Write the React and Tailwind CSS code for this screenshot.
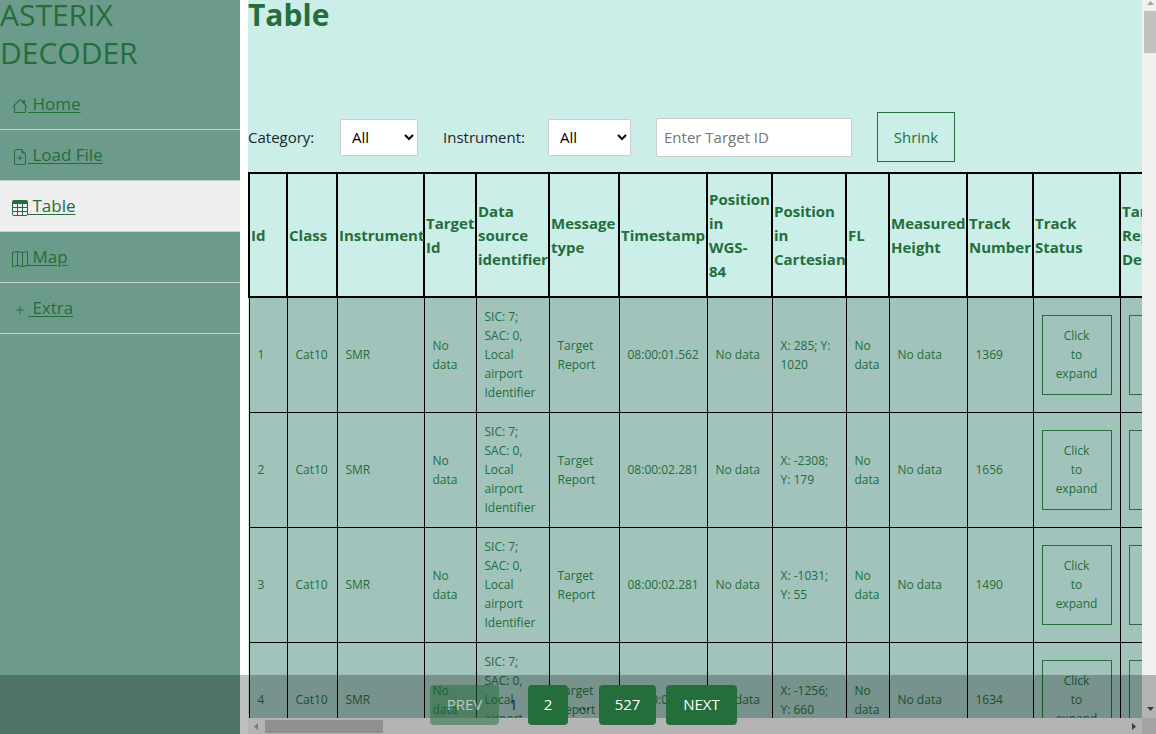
import React from "react";
import { BsHouse, BsFileEarmarkPlus, BsTable, BsMap, BsPlus } from "react-icons/bs";

const links = [
  { label: "Home", Icon: BsHouse },
  { label: "Load File", Icon: BsFileEarmarkPlus },
  { label: "Table", Icon: BsTable, active: true },
  { label: "Map", Icon: BsMap },
  { label: "Extra", Icon: BsPlus },
];

const columns = [
  { title: "Id", width: "w-[38px]" },
  { title: "Class", width: "w-[50px]" },
  { title: "Instrument", width: "w-[87px]" },
  { title: "Target Id", width: "w-[52px]" },
  { title: "Data source identifier", width: "w-[73px]" },
  { title: "Message type", width: "w-[70px]" },
  { title: "Timestamp", width: "w-[88px]" },
  { title: "Position\nin\nWGS-\n84", width: "w-[65px]" },
  { title: "Position in Cartesian", width: "w-[74px]" },
  { title: "FL", width: "w-[43px]" },
  { title: "Measured Height", width: "w-[78px]" },
  { title: "Track Number", width: "w-[66px]" },
  { title: "Track Status", width: "w-[87px]" },
  { title: "Target Report Descriptor", width: "w-[87px]" },
];

const rows = [
  { id: 1, time: "08:00:01.562", xy: "X: 285; Y: 1020", track: 1369 },
  { id: 2, time: "08:00:02.281", xy: "X: -2308; Y: 179", track: 1656 },
  { id: 3, time: "08:00:02.281", xy: "X: -1031; Y: 55", track: 1490 },
  { id: 4, time: "08:00:02.281", xy: "X: -1256; Y: 660", track: 1634 },
];

function Sidebar() {
  return (
    <aside className="w-60 shrink-0 bg-[#6c9b8b] text-[#236e3a]">
      <h1 className="-mt-1 text-[30px] leading-[38px]">
        ASTERIX
        <br />
        DECODER
      </h1>
      <nav className="pt-[7px]">
        <ul>
          {links.map(({ label, Icon, active }) => (
            <li key={label} className={active ? "border-b border-[#d0d0d0] bg-[#efefef]" : "border-b border-[#c8d0cc]"}>
              <a href="#" className="flex h-[50px] items-center px-3 text-[17px]">
                <Icon className="mt-1 size-4 shrink-0" />
                <span className="whitespace-pre underline underline-offset-2">{" " + label}</span>
              </a>
            </li>
          ))}
        </ul>
      </nav>
    </aside>
  );
}

function Filters() {
  return (
    <form className="flex items-center gap-[25px] pb-[10px] text-[15px] text-[#212529]">
      <label htmlFor="category" className="w-[67px] whitespace-nowrap">Category:</label>
      <select id="category" className="h-[37px] w-[78px] rounded-xs border border-[#ccc] bg-white px-[7px] text-black">
        <option>All</option>
      </select>
      <label htmlFor="instrument" className="w-20 whitespace-nowrap">Instrument:</label>
      <select id="instrument" className="h-[37px] w-[83px] rounded-xs border border-[#ccc] bg-white px-[7px] text-black">
        <option>All</option>
      </select>
      <input
        aria-label="Target ID"
        placeholder="Enter Target ID"
        className="h-[39px] w-[196px] rounded-xs border border-[#ccc] bg-white px-[7px] placeholder:text-[#757575]"
      />
      <button type="button" className="h-[50px] w-[78px] border border-[#236e3a] text-[#236e3a]">
        Shrink
      </button>
    </form>
  );
}

function ExpandButton() {
  return (
    <button type="button" className="block h-20 w-[70px] border border-[#236e3a] text-center leading-[19px]">
      Click
      <br />
      to
      <br />
      expand
    </button>
  );
}

function DataTable() {
  return (
    <table className="w-[958px] table-fixed border-collapse text-[#236e3a]">
      <thead>
        <tr className="h-[124px]">
          {columns.map((c) => (
            <th key={c.title} className={`${c.width} border-2 border-black px-px text-left text-[15px] leading-6 font-bold whitespace-pre-line`}>
              {c.title}
            </th>
          ))}
        </tr>
      </thead>
      <tbody className="bg-[#a1c3bc] text-[12px] leading-[19px]">
        {rows.map((r) => (
          <tr key={r.id} className="h-[115px] [&>td]:border [&>td]:border-black [&>td]:px-2">
            <td>{r.id}</td>
            <td>Cat10</td>
            <td>SMR</td>
            <td>No data</td>
            <td>SIC: 7; SAC: 0, Local airport Identifier</td>
            <td>Target Report</td>
            <td>{r.time}</td>
            <td className="whitespace-nowrap">No data</td>
            <td>{r.xy}</td>
            <td>No data</td>
            <td>No data</td>
            <td>{r.track}</td>
            <td><ExpandButton /></td>
            <td><ExpandButton /></td>
          </tr>
        ))}
      </tbody>
    </table>
  );
}

function VerticalBar() {
  return (
    <div aria-hidden="true" className="flex w-[14px] shrink-0 flex-col bg-[#f1f1f1]">
      <svg className="h-[11px] w-full" viewBox="0 0 14 11">
        <path d="M5 5h7L8.500 1z" fill="#a3a3a3" />
      </svg>
      <div className="ml-[2px] h-[42px] bg-[#c1c1c1]" />
      <div className="flex-1" />
      <svg className="h-4 w-full" viewBox="0 0 14 16">
        <path d="M5 5h7L8.500 9z" fill="#505050" />
      </svg>
      <div className="h-4 bg-[#dcdcdc]" />
    </div>
  );
}

function HorizontalBar() {
  return (
    <div aria-hidden="true" className="flex h-4 shrink-0 items-center justify-between bg-[#f1f1f1]">
      <svg className="h-4 w-[17px]" viewBox="0 0 17 16">
        <path d="M10 5v7L6 8.500z" fill="#a3a3a3" />
      </svg>
      <div className="h-[13px] w-[118px] bg-[#c1c1c1]" />
      <div className="flex-1" />
      <svg className="h-4 w-4" viewBox="0 0 16 16">
        <path d="M6 5v7L10 8.500z" fill="#505050" />
      </svg>
    </div>
  );
}

function Pagination() {
  const button = "h-10 rounded-sm bg-[#236e3a] font-medium text-white";
  return (
    <footer className="absolute inset-x-0 bottom-0 flex h-[59px] items-center justify-center gap-[10px] bg-black/25 pl-[11px] text-[15px] text-[#212529]">
      <button type="button" disabled className={`${button} w-[69px] opacity-50`}>PREV</button>
      <span className="w-[9px] text-center">1</span>
      <button type="button" className={`${button} w-10`}>2</button>
      <span className="w-[11px] text-center">...</span>
      <button type="button" className={`${button} w-[57px]`}>527</button>
      <button type="button" className={`${button} w-[71px]`}>NEXT</button>
    </footer>
  );
}

export default function App() {
  return (
    <div className="relative flex h-screen overflow-hidden bg-white font-['Open_Sans','Noto_Sans',sans-serif]">
      <Sidebar />
      <div className="ml-2 flex min-w-0 flex-1 flex-col">
        <main className="min-h-0 flex-1 overflow-hidden bg-[#cceee8]">
          <h2 className="h-28 text-[30px] leading-[30px] font-bold text-[#236e3a]">Table</h2>
          <Filters />
          <DataTable />
        </main>
        <HorizontalBar />
      </div>
      <VerticalBar />
      <Pagination />
    </div>
  );
}
